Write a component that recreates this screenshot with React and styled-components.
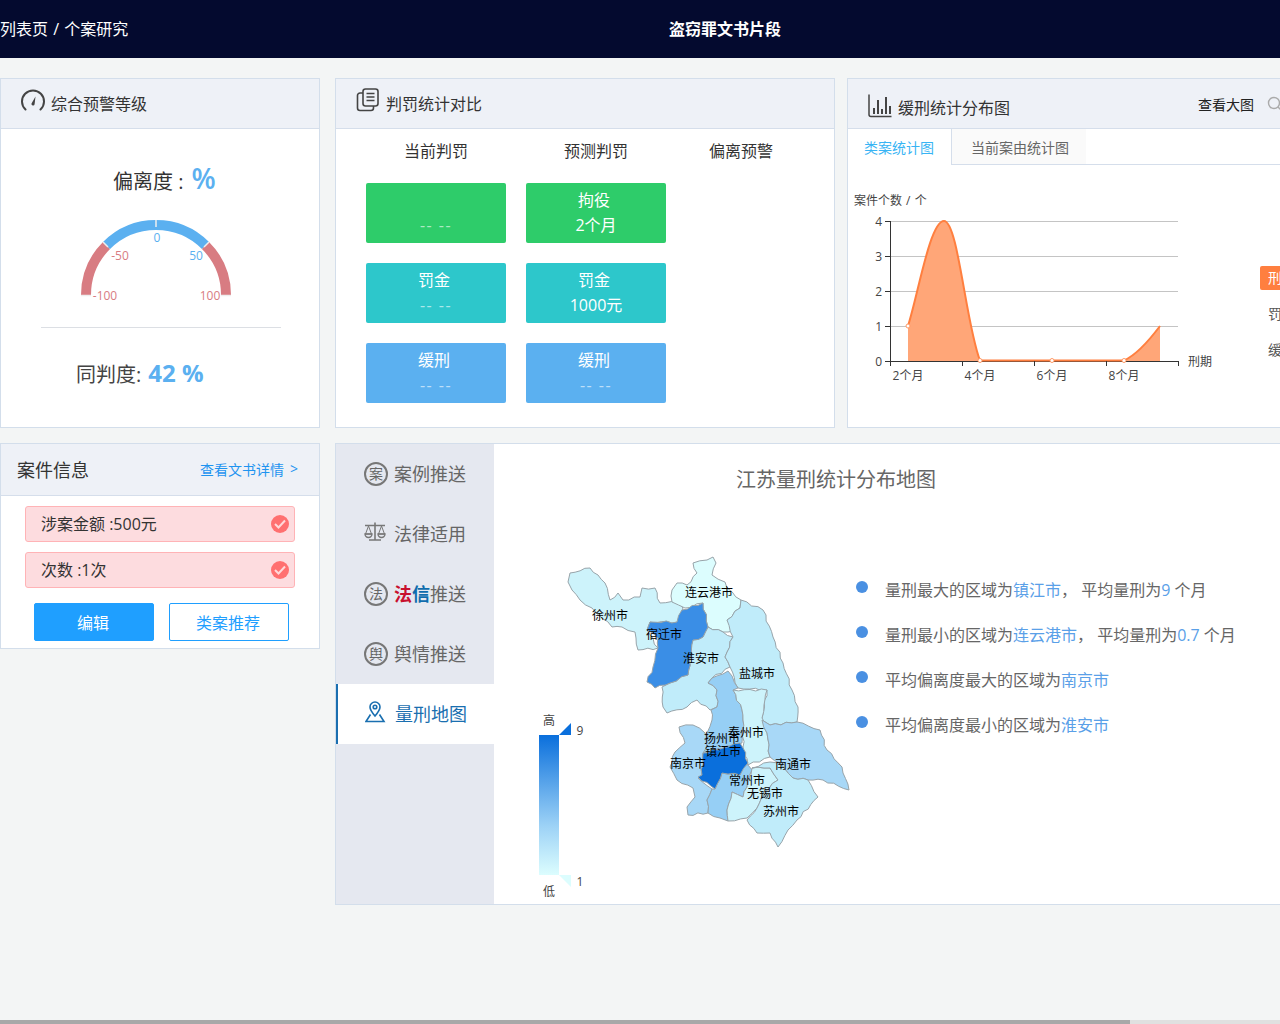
import React from "react";
import styled, { createGlobalStyle } from "styled-components";

const Global = createGlobalStyle`
  html, body { margin: 0; padding: 0; height: 100%; overflow: hidden; background: #f3f5f5; }
  body { font-family: "Open Sans", "Noto Sans CJK SC", "Liberation Sans", sans-serif; color: #333; }
  * { box-sizing: border-box; }
`;

const Page = styled.div`
  width: 1280px; height: 1024px; display: flex; flex-direction: column; overflow: hidden; background: #f3f5f5;
`;
const TopBar = styled.header`
  height: 58px; flex: none; background: #040a2f; color: #fff; display: grid; grid-template-columns: 669px auto;
  align-items: center; font-size: 16px; padding-bottom: 2px;
`;
const Crumb = styled.span` word-spacing: 1px; `;
const Title = styled.div` font-weight: 700; `;
const Main = styled.main`
  flex: 1; min-height: 0; padding-top: 20px; display: flex; flex-direction: column; gap: 15px;
`;
const Row = styled.div`
  display: flex; align-items: flex-start; flex: none; width: 1400px;
`;
const Panel = styled.section`
  flex: none; width: ${p => p.$w}px; height: ${p => p.$h}px; margin-right: ${p => p.$mr || 0}px;
  background: #fff; border: 1px solid #d3deeb; display: flex; flex-direction: column;
`;
const PanelHead = styled.div`
  height: 50px; flex: none; background: #eef1f7; border-bottom: 1px solid #d5deeb; display: flex; align-items: center;
  padding: 0 20px 2px; gap: 6px; font-size: 16px; color: #333;
`;
const HeadText = styled.span` margin-top: ${p => p.$mt || 0}px; `;
const HeadTools = styled.div`
  margin-left: auto; display: flex; align-items: center; gap: 13px; font-size: 14px; margin-top: 3px; color: #222;
`;
const Body = styled.div` flex: 1; min-height: 0; `;

const DevRow = styled.div`
  height: 36px; margin-top: 33px; padding-left: 112px; display: flex; align-items: center; gap: 8px; font-size: 20px;
`;
const DevPct = styled.span` font-size: 28px; font-weight: 600; color: #5bb0f0; line-height: 1; margin-top: -5px; `;
const GaugeWrap = styled.div` margin: 17px 0 22px 75px; width: 160px; height: 90px; `;
const Rule = styled.div` width: 240px; height: 1px; margin-left: 40px; background: #dcdfe4; `;
const SimRow = styled.div`
  height: 36px; margin-top: 27px; padding-left: 75px; display: flex; align-items: center; gap: 7px; font-size: 20px; color: #444;
`;
const SimVal = styled.span` font-size: 24px; font-weight: 700; color: #5bb0f0; margin-top: -1px; `;
const GaugeText = styled.text`
  font-size: 12px; text-anchor: middle; dominant-baseline: central; fill: ${p => p.$c};
`;

const ColHead = styled.div`
  display: grid; grid-template-columns: 140px 140px 110px; column-gap: 20px; padding: 6px 0 0 30px; height: 54px;
  font-size: 16px; line-height: 32px; text-align: center; color: #333;
`;
const CardGrid = styled.div`
  display: grid; grid-template-columns: 140px 140px; gap: 20px; padding-left: 30px;
`;
const Card = styled.div`
  height: 60px; border-radius: 2px; background: ${p => p.$bg}; color: #fff; font-size: 16px; line-height: 25px; padding-top: 5px;
  display: flex; flex-direction: column; align-items: center;
`;
const CardTop = styled.span` margin-right: 4px; `;
const CardBottom = styled.span`
  opacity: ${p => (p.$dim ? 0.6 : 1)}; letter-spacing: ${p => (p.$dim ? 1.5 : 0)}px;
`;

const Tabs = styled.div` height: 36px; flex: none; display: flex; border-bottom: 1px solid #d5deeb; `;
const Tab = styled.div`
  height: ${p => (p.$active ? 36 : 35)}px; display: flex; align-items: center; font-size: 14px;
  padding-left: ${p => (p.$active ? 16 : 19)}px; padding-right: 17px;
  color: ${p => (p.$active ? "#38b4f4" : "#666")}; background: ${p => (p.$active ? "#fff" : "#fafafa")};
  border-right: ${p => (p.$active ? "1px solid #d5deeb" : "0")};
`;
const ChartRow = styled.div` display: flex; flex: 1; min-height: 0; `;
const Legend = styled.div` display: flex; flex-direction: column; gap: 12px; padding-top: 101px; font-size: 14px; color: #555; `;
const LegendItem = styled.div`
  width: 60px; height: 24px; line-height: 24px; padding-left: 8px; border-radius: 2px;
  background: ${p => (p.$on ? "#ff7f3f" : "transparent")}; color: ${p => (p.$on ? "#fff" : "#555")};
`;
const ChartText = styled.text`
  font-size: 12px; fill: ${p => p.$c || "#444"}; text-anchor: ${p => p.$a || "middle"}; dominant-baseline: central;
  word-spacing: 1px;
`;

const InfoBody = styled.div` padding: 10px 24px 0; display: flex; flex-direction: column; gap: 10px; `;
const InfoHead = styled(PanelHead)` padding: 0 21px 2px 16px; justify-content: space-between; height: 52px; `;
const InfoTitle = styled.span` font-size: 18px; color: #333; `;
const InfoLink = styled.span` font-size: 14px; color: #1f94f0; display: flex; gap: 6px; `;
const Tag = styled.div`
  height: 36px; background: #fddcdf; border: 1px solid #ffb3b6; border-radius: 3px; display: flex; align-items: center;
  justify-content: space-between; padding: 0 5px 2px 15px; font-size: 16px; color: #333;
`;
const Check = styled.span`
  width: 18px; height: 18px; border-radius: 50%; background: #ff7070; display: flex; align-items: center; justify-content: center;
  margin-bottom: -2px;
`;
const BtnRow = styled.div` display: flex; gap: 15px; padding: 5px 0 0 9px; `;
const Btn = styled.button`
  width: 120px; height: 38px; border-radius: 2px; border: 1px solid #1f9fff; font: inherit; font-size: 16px; padding: 0 2px 0 0;
  background: ${p => (p.$solid ? "#1f9fff" : "#fff")}; color: ${p => (p.$solid ? "#fff" : "#1f9fff")};
`;

const Wide = styled.section`
  flex: none; width: 1000px; height: 462px; background: #fff; border: 1px solid #d3deeb; display: flex;
`;
const Side = styled.nav` width: 158px; flex: none; background: #e5e8f0; `;
const MenuItem = styled.div`
  height: 60px; display: flex; align-items: center; gap: 6px; font-size: 18px; padding-bottom: 2px;
  padding-left: ${p => (p.$active ? 27 : 28)}px; color: ${p => (p.$active ? "#1a6fb0" : "#666")};
  background: ${p => (p.$active ? "#fff" : "transparent")}; border-left: ${p => (p.$active ? "2px solid #1a6fb0" : "0")};
`;
const Seal = styled.span`
  width: 24px; height: 24px; border: 2px solid #777; border-radius: 50%; display: flex; align-items: center; justify-content: center;
  font-size: 14px; line-height: 1; color: #666; flex: none; margin-bottom: -2px; padding-bottom: 1px;
`;
const Red = styled.b` color: #c8102e; `;
const Blue = styled.b` color: #0f6cad; `;
const MapArea = styled.div` flex: 1; min-width: 0; display: flex; flex-direction: column; `;
const MapTitle = styled.h2`
  margin: 0; width: 684px; height: 56px; padding-top: 20px; line-height: 32px; text-align: center; font-size: 20px; font-weight: 400; color: #666;
  flex: none;
`;
const MapRow = styled.div` flex: 1; display: flex; min-height: 0; `;
const MapList = styled.ul` list-style: none; margin: 0; padding: 66px 0 0 0; `;
const MapItem = styled.li`
  height: 45px; display: flex; align-items: center; font-size: 16px; color: #666; white-space: nowrap;
  &::before {
    content: ""; width: 12px; height: 12px; border-radius: 50%; background: #4a90e2; margin: -4px 17px 0 0; flex: none;
  }
`;
const Hi = styled.span` color: #5aa0e8; `;
const MapLabel = styled.text` font-size: 12px; fill: #000; text-anchor: middle; dominant-baseline: central; `;
const LegendLabel = styled.text` font-size: 12px; fill: #444; text-anchor: middle; dominant-baseline: central; `;
const Region = styled.polygon` stroke: #98a4aa; stroke-width: 1; stroke-linejoin: round; fill: ${p => p.$f}; `;

const ScrollTrack = styled.div` height: 4px; flex: none; background: #e0e0e0; `;
const ScrollThumb = styled.div` height: 4px; width: 1130px; background: #a8a8a8; `;

const Svg = styled.svg`
  display: block; flex: none; margin: ${p => p.$m || "0"};
`;

const GaugeIcon = () => (
  <Svg width="24" height="24" viewBox="0 0 24 24" fill="none" $m="-5px 0 0 0">
    <path d="M4.5 21.5A11 11 0 1 1 19.5 21.5" stroke="#444" strokeWidth="2" strokeLinecap="round" />
    <path d="M10.5 15.5L14.5 8.5L13.6 16.3A1.6 1.6 0 0 1 10.5 15.5Z" fill="#444" />
  </Svg>
);
const DocsIcon = () => (
  <Svg width="24" height="24" viewBox="0 0 24 24" fill="none" stroke="#444" strokeWidth="1.6" $m="-5px 0 0 0">
    <rect x="7" y="1" width="15" height="17" rx="2.5" />
    <path d="M10.5 5.5h8M10.5 9h8M10.5 12.5h8" />
    <path d="M7 5H4a2.5 2.5 0 0 0-2.5 2.5V20A2.5 2.5 0 0 0 4 22.5h11a2.5 2.5 0 0 0 2.5-2.5v-2" />
  </Svg>
);
const BarsIcon = () => (
  <Svg width="24" height="24" viewBox="0 0 24 24" fill="none" stroke="#444" $m="6px 0 0 0">
    <path d="M1 0.5V20.5a2 2 0 0 0 2 2H23.5" strokeWidth="1.5" />
    <path d="M6 14v6M10 6v14M14 15v5M18 3v17M22 12v8" strokeWidth="2" />
  </Svg>
);
const SearchIcon = () => (
  <Svg width="16" height="16" viewBox="0 0 16 16" fill="none" stroke="#aaa" strokeWidth="1.4">
    <circle cx="7" cy="7" r="5.5" /><path d="M11 11l4 4" />
  </Svg>
);
const ScalesIcon = () => (
  <Svg width="24" height="24" viewBox="0 0 24 24" fill="none" stroke="#777" strokeWidth="1.6" $m="-2px 0 0 0">
    <path d="M1 5.5h20M11 2.500v17M5 20h12" />
    <path d="M4.500 6L1.500 14h6zM17.500 6L14.500 14h6z" strokeWidth="1" />
    <path d="M1 14a3.500 3.500 0 0 0 7 0zM14 14a3.500 3.500 0 0 0 7 0z" strokeWidth="1.4" />
  </Svg>
);
const PinIcon = () => (
  <Svg width="24" height="24" viewBox="2 0 24 24" fill="none" stroke="#1a6fb0" strokeWidth="1.6" $m="-3px 0 0 0">
    <path d="M12 16c-3-3.5-5-6-5-9a5 5 0 0 1 10 0c0 3-2 5.500-5 9z" />
    <circle cx="12" cy="7" r="1.800" />
    <path d="M7.500 14.500L3 21.500h18l-4.500-7" />
  </Svg>
);
const CheckIcon = () => (
  <svg width="12" height="10" viewBox="0 0 12 10" fill="none" stroke="#ffd9d9" strokeWidth="2">
    <path d="M1 5l3.500 3.500L11 1.500" />
  </svg>
);

const Gauge = () => (
  <svg width="160" height="90" viewBox="0 0 160 90" fill="none">
    <path d="M10 80A70 70 0 0 1 30.500 30.500" stroke="#d87c82" strokeWidth="10" />
    <path d="M30.500 30.500A70 70 0 0 1 129.500 30.500" stroke="#5bb0f0" strokeWidth="10" />
    <path d="M129.500 30.500A70 70 0 0 1 150 80" stroke="#d87c82" strokeWidth="10" />
    <path d="M80 5v7M27 27l5 5M133 27l-5 5M5 80.500h10M145 80.500h10" stroke="#eee" strokeWidth="1.500" />
    <GaugeText x="81" y="22" $c="#5bb0f0">0</GaugeText>
    <GaugeText x="44" y="40" $c="#d87c82">-50</GaugeText>
    <GaugeText x="120" y="40" $c="#5bb0f0">50</GaugeText>
    <GaugeText x="29" y="80" $c="#d87c82">-100</GaugeText>
    <GaugeText x="134" y="80" $c="#d87c82">100</GaugeText>
  </svg>
);

const yTicks = [[4, 221], [3, 256], [2, 291], [1, 326], [0, 361]];
const xTicks = [890, 962, 1034, 1106, 1178];
const xLabels = [[908, "2个月"], [980, "4个月"], [1052, "6个月"], [1124, "8个月"]];
const curve = "C918 295 930 221 944 221C958 221 966 325 980 360.500L1124 360.500C1136 355 1148 342 1160 326";

const LineChart = () => (
  <Svg width="412" height="262" viewBox="848 165 412 262" fill="none">
    <ChartText x="854" y="200" $a="start">案件个数 / 个</ChartText>
    {yTicks.slice(0, 4).map(([, y]) => <path key={y} d={`M890 ${y + 0.5}H1178`} stroke="#c4c4c4" />)}
    <path d="M890.500 221V361.500H1178.500" stroke="#333" />
    <path d={`M908 326${curve}V361H908Z`} fill="#ffa678" />
    <path d={`M908 326${curve}`} stroke="#ff7f3f" strokeWidth="2" />
    {yTicks.map(([, y]) => <path key={y} d={`M885 ${y + 0.5}H890`} stroke="#333" />)}
    {xTicks.map(x => <path key={x} d={`M${x + 0.5} 361V366`} stroke="#333" />)}
    {yTicks.map(([n, y]) => <ChartText key={n} x="882" y={y} $a="end">{n}</ChartText>)}
    {xLabels.map(([x, t]) => <ChartText key={x} x={x} y="375">{t}</ChartText>)}
    <ChartText x="1188" y="361" $a="start">刑期</ChartText>
    {[[908, 326], [980, 360.5], [1052, 360.5], [1124, 360.5]].map(([x, y]) => (
      <circle key={x} cx={x} cy={y} r="2" fill="#fff" stroke="#ff9a66" strokeWidth="1" />
    ))}
  </Svg>
);

const regions = [
  ["#cdf3fb", "570,573 590,568 598,575 605,583 610,600 618,593 623,600 640,597 642,588 655,588 660,603 677,602 683,608 678,622 650,622 647,630 658,648 638,650 635,632 622,627 612,627 602,618 592,608 580,600 572,590 568,582"],
  ["#dcfdfe", "693,563 707,560 713,557 716,563 712,575 725,582 727,588 741,600 740,608 727,620 733,631 723,632 708,627 703,603 685,608 672,602 672,590 677,583 687,585 697,573"],
  ["#c0ecfa", "708,627 723,632 733,637 725,657 730,667 712,678 708,683 717,690 717,707 710,710 697,700 687,707 667,713 663,707 662,687 670,683 688,675 693,640 703,637"],
  ["#c0ecfa", "741,600 763,610 773,637 783,663 792,690 798,707 797,722 770,725 762,720 762,718 767,690 738,688 730,667 725,657 733,637 727,620 740,608"],
  ["#3a8ee6", "650,622 677,622 682,610 703,603 708,627 703,637 693,640 688,675 670,683 655,688 647,682 653,667 658,648 658,638 647,630"],
  ["#96cff5", "712,678 728,671 738,688 733,690 742,710 743,720 742,743 703,753 707,733 712,720 711,710 717,707 717,690 708,683"],
  ["#cdf3fb", "733,690 767,690 764,705 762,718 767,733 770,757 748,765 743,747 743,720 742,710"],
  ["#a8d8f7", "762,720 770,725 797,722 820,730 827,750 842,767 849,790 823,780 808,780 793,778 780,763 770,757 767,733"],
  ["#a8d8f7", "679,727 693,725 705,733 707,743 703,753 702,775 698,778 712,789 707,800 708,813 688,815 687,807 695,797 693,788 677,780 670,767 675,752 685,743"],
  ["#96cff5", "722,773 740,775 743,762 752,770 747,787 743,797 732,792 727,810 728,821 720,818 708,813 707,800 712,789 715,789"],
  ["#cdf3fb", "752,768 770,768 778,780 763,793 757,808 747,818 728,821 727,810 732,792 743,797 747,787"],
  ["#c0ecfa", "752,768 770,762 780,763 793,778 808,780 818,797 797,820 788,830 778,847 770,833 757,833 747,820 757,808 763,793 778,780 770,768"],
  ["#0a6fdc", "703,753 723,748 740,743 743,748 748,763 740,775 722,773 715,789 698,777 702,775"],
];

// Adds the small bumps of a coastline/border to each straight edge; shared edges get the same bumps.
const roughen = str => {
  const pts = str.split(" ").map(s => s.split(",").map(Number));
  const out = [];
  pts.forEach((a, i) => {
    const b = pts[(i + 1) % pts.length];
    const flip = a[0] > b[0] || (a[0] === b[0] && a[1] > b[1]);
    const [c, d] = flip ? [b, a] : [a, b];
    const dx = d[0] - c[0], dy = d[1] - c[1], len = Math.hypot(dx, dy);
    const n = Math.max(1, Math.floor(len / 5));
    const seed = c[0] * 3.1 + c[1] * 1.7 + d[0] * 0.9 + d[1] * 2.3;
    const mids = [];
    for (let k = 1; k < n; k++) {
      const off = Math.sin(seed + k * 2.4) * 1.1;
      mids.push([c[0] + (dx * k) / n - (dy / len) * off, c[1] + (dy * k) / n + (dx / len) * off]);
    }
    if (flip) mids.reverse();
    out.push(a, ...mids);
  });
  return out.map(p => `${p[0].toFixed(1)},${p[1].toFixed(1)}`).join(" ");
};

const cities = [
  ["连云港市", 709, 592], ["徐州市", 610, 615], ["宿迁市", 664, 634], ["淮安市", 701, 658], ["盐城市", 757, 673],
  ["泰州市", 746, 732], ["扬州市", 722, 738], ["镇江市", 723, 751], ["南京市", 688, 763], ["南通市", 793, 764],
  ["常州市", 747, 780], ["无锡市", 765, 793], ["苏州市", 781, 811],
];

const JiangsuMap = () => (
  <Svg width="362" height="405" viewBox="494 500 362 405">
    <defs>
      <linearGradient id="scale" x1="0" y1="0" x2="0" y2="1">
        <stop offset="0" stopColor="#0a6fdc" />
        <stop offset="0.35" stopColor="#5aa5ea" />
        <stop offset="0.65" stopColor="#9dd2f6" />
        <stop offset="1" stopColor="#dcfdfe" />
      </linearGradient>
    </defs>
    {regions.map(([f, pts], i) => <Region key={i} $f={f} points={roughen(pts)} />)}
    {cities.map(([t, x, y]) => <MapLabel key={t} x={x} y={y}>{t}</MapLabel>)}
    <rect x="539" y="735" width="20" height="140" fill="url(#scale)" />
    <polygon points="559,735 571,735 571,723" fill="#0a6fdc" />
    <polygon points="559,875 571,875 571,887" fill="#dcfdfe" />
    <LegendLabel x="549" y="720">高</LegendLabel>
    <LegendLabel x="549" y="891">低</LegendLabel>
    <LegendLabel x="580" y="730">9</LegendLabel>
    <LegendLabel x="580" y="881">1</LegendLabel>
  </Svg>
);

export default function App() {
  return (
    <Page>
      <Global />
      <TopBar>
        <Crumb>列表页 / 个案研究</Crumb>
        <Title>盗窃罪文书片段</Title>
      </TopBar>
      <Main>
        <Row>
          <Panel $w={320} $h={350} $mr={15}>
            <PanelHead><GaugeIcon /><HeadText>综合预警等级</HeadText></PanelHead>
            <Body>
              <DevRow>偏离度 : <DevPct>%</DevPct></DevRow>
              <GaugeWrap><Gauge /></GaugeWrap>
              <Rule />
              <SimRow>同判度: <SimVal>42 %</SimVal></SimRow>
            </Body>
          </Panel>
          <Panel $w={500} $h={350} $mr={12}>
            <PanelHead><DocsIcon /><HeadText>判罚统计对比</HeadText></PanelHead>
            <Body>
              <ColHead><span>当前判罚</span><span>预测判罚</span><span>偏离预警</span></ColHead>
              <CardGrid>
                <Card $bg="#2ecc6a"><CardTop>&nbsp;</CardTop><CardBottom $dim>-- --</CardBottom></Card>
                <Card $bg="#2ecc6a"><CardTop>拘役</CardTop><CardBottom>2个月</CardBottom></Card>
                <Card $bg="#2dc7cb"><CardTop>罚金</CardTop><CardBottom $dim>-- --</CardBottom></Card>
                <Card $bg="#2dc7cb"><CardTop>罚金</CardTop><CardBottom>1000元</CardBottom></Card>
                <Card $bg="#5bb0f0"><CardTop>缓刑</CardTop><CardBottom $dim>-- --</CardBottom></Card>
                <Card $bg="#5bb0f0"><CardTop>缓刑</CardTop><CardBottom $dim>-- --</CardBottom></Card>
              </CardGrid>
            </Body>
          </Panel>
          <Panel $w={457} $h={350}>
            <PanelHead>
              <BarsIcon /><HeadText $mt={8}>缓刑统计分布图</HeadText>
              <HeadTools>查看大图<SearchIcon /></HeadTools>
            </PanelHead>
            <Tabs>
              <Tab $active>类案统计图</Tab>
              <Tab>当前案由统计图</Tab>
            </Tabs>
            <ChartRow>
              <LineChart />
              <Legend>
                <LegendItem $on>刑期</LegendItem>
                <LegendItem>罚金</LegendItem>
                <LegendItem>缓刑</LegendItem>
              </Legend>
            </ChartRow>
          </Panel>
        </Row>
        <Row>
          <Panel $w={320} $h={206} $mr={15}>
            <InfoHead><InfoTitle>案件信息</InfoTitle><InfoLink>查看文书详情<span>&gt;</span></InfoLink></InfoHead>
            <InfoBody>
              <Tag>涉案金额 :500元<Check><CheckIcon /></Check></Tag>
              <Tag>次数 :1次<Check><CheckIcon /></Check></Tag>
              <BtnRow><Btn $solid>编辑</Btn><Btn>类案推荐</Btn></BtnRow>
            </InfoBody>
          </Panel>
          <Wide>
            <Side>
              <MenuItem><Seal>案</Seal>案例推送</MenuItem>
              <MenuItem><ScalesIcon />法律适用</MenuItem>
              <MenuItem><Seal>法</Seal><span><Red>法</Red><Blue>信</Blue>推送</span></MenuItem>
              <MenuItem><Seal>舆</Seal>舆情推送</MenuItem>
              <MenuItem $active><PinIcon />量刑地图</MenuItem>
            </Side>
            <MapArea>
              <MapTitle>江苏量刑统计分布地图</MapTitle>
              <MapRow>
                <JiangsuMap />
                <MapList>
                  <MapItem><span>量刑最大的区域为<Hi>镇江市</Hi>， 平均量刑为<Hi>9</Hi> 个月</span></MapItem>
                  <MapItem><span>量刑最小的区域为<Hi>连云港市</Hi>， 平均量刑为<Hi>0.7</Hi> 个月</span></MapItem>
                  <MapItem><span>平均偏离度最大的区域为<Hi>南京市</Hi></span></MapItem>
                  <MapItem><span>平均偏离度最小的区域为<Hi>淮安市</Hi></span></MapItem>
                </MapList>
              </MapRow>
            </MapArea>
          </Wide>
        </Row>
      </Main>
      <ScrollTrack><ScrollThumb /></ScrollTrack>
    </Page>
  );
}
